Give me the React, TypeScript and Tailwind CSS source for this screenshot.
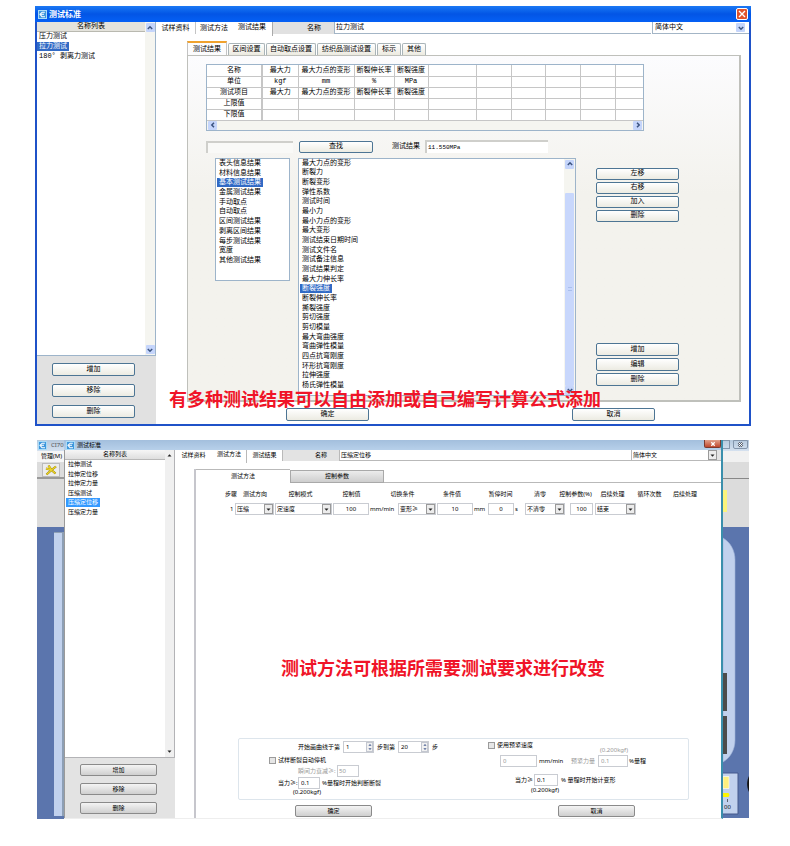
import React from "react";

const XP_TEXT = "font-['Liberation_Mono','Noto_Sans_CJK_SC',monospace] text-[7px] leading-[9px]";
const WIN7_TEXT = "font-['Noto_Sans','Noto_Sans_CJK_SC',sans-serif] text-[6px] leading-[9px]";

const resultCategories = [
  "表头信息结果", "材料信息结果", "基本测试结果", "金属测试结果", "手动取点", "自动取点",
  "区间测试结果", "剥离区间结果", "每步测试结果", "宽度", "其他测试结果",
];

const resultItems = [
  "最大力点的变形", "断裂力", "断裂变形", "弹性系数", "测试时间", "最小力", "最小力点的变形", "最大变形",
  "测试结束日期时间", "测试文件名", "测试备注信息", "测试结果判定", "最大力伸长率", "断裂强度", "断裂伸长率",
  "撕裂强度", "剪切强度", "剪切模量", "最大弯曲强度", "弯曲弹性模量", "四点抗弯刚度", "环形抗弯刚度", "拉伸强度",
  "杨氏弹性模量",
];

const resultTable = [
  ["名称", "最大力", "最大力点的变形", "断裂伸长率", "断裂强度"],
  ["单位", "kgf", "mm", "%", "MPa"],
  ["测试项目", "最大力", "最大力点的变形", "断裂伸长率", "断裂强度"],
  ["上限值"],
  ["下限值"],
];

const tableColumns = [
  "w-[55px]", "w-[36px]", "w-[56px]", "w-[40px]", "w-[34px]", "w-[48px]",
  "w-[35px]", "w-[34px]", "w-[35px]", "w-[35px]", "w-[28px]",
];

const stepHeaders: [string, string][] = [
  ["步骤", "w-[14px]"], ["测试方向", "w-[34px]"], ["控制模式", "w-[57px]"], ["控制值", "w-[45px]"],
  ["切换条件", "w-[57px]"], ["条件值", "w-[42px]"], ["暂停时间", "w-[55px]"], ["清零", "w-[24px]"],
  ["控制参数(%)", "w-[47px]"], ["后续处理", "w-[27px]"], ["循环次数", "w-[47px]"], ["后续处理", "w-[24px]"],
];

function AppIcon() {
  return (
    <svg viewBox="0 0 9 9" className="size-[9px] shrink-0" aria-hidden="true">
      <rect width="9" height="9" fill="#3f97dc" />
      <rect x=".5" y=".5" width="8" height="8" fill="none" stroke="#a9dcf8" />
      <path d="M6.8 2.2H4.2L2 4.2 4 6.8H7M3 4.3h3" fill="none" stroke="#fff" strokeWidth="1.1" />
    </svg>
  );
}

function Chevron({ turn = "" }: { turn?: string }) {
  return (
    <span className="flex size-[9px] shrink-0 items-center justify-center rounded-[1px] bg-[#c5d5fb]">
      <svg viewBox="0 0 6 6" className={`size-[6px] ${turn}`} aria-hidden="true">
        <path d="M.8 2 3 4.2 5.2 2" fill="none" stroke="#3c5480" strokeWidth="1.5" />
      </svg>
    </span>
  );
}

function Triangle({ turn = "" }: { turn?: string }) {
  return (
    <svg viewBox="0 0 6 6" className={`size-[5px] ${turn}`} aria-hidden="true">
      <path d="M.6 1.8h4.8L3 4.6z" fill="#222" />
    </svg>
  );
}

function StepArrow({ turn = "" }: { turn?: string }) {
  return (
    <svg viewBox="0 0 6 6" className={`size-1 ${turn}`} aria-hidden="true">
      <path d="M.6 1.8h4.800L3 4.6z" fill="#4a5f92" />
    </svg>
  );
}

function XpButton({ children, className = "" }: { children: string; className?: string }) {
  return (
    <button
      type="button"
      className={`flex items-center justify-center rounded-[2px] border border-[#4d7594] bg-linear-to-b from-white to-[#ecebe2] ${className}`}
    >
      {children}
    </button>
  );
}

function Win7Button({ children, className = "" }: { children: string; className?: string }) {
  return (
    <button
      type="button"
      className={`flex h-3 w-[77px] items-center justify-center rounded-[2px] border border-[#8a8a8a] bg-linear-to-b from-[#f4f4f4] to-[#cfcfcf] ${className}`}
    >
      {children}
    </button>
  );
}

function List({ items, selected, highlight, label, className }: {
  items: string[]; selected: string; highlight: string; label: string; className: string;
}) {
  return (
    <ul role="listbox" aria-label={label} className={`grid auto-rows-fr ${className}`}>
      {items.map((item) => (
        <li key={item} role="option" aria-selected={item === selected} className="flex items-center">
          <span className={`px-[2px] ${item === selected ? highlight : ""}`}>{item}</span>
        </li>
      ))}
    </ul>
  );
}

function Drop({ value, label, className }: { value: string; label: string; className: string }) {
  return (
    <span className={`relative block shrink-0 border border-[#c9ccd2] bg-white ${className}`}>
      <select aria-label={label} defaultValue={value} className="block h-full w-full appearance-none pl-px leading-[10px] outline-none">
        <option>{value}</option>
      </select>
      <span className="pointer-events-none absolute inset-y-0 right-0 flex w-[9px] items-center justify-center border border-[#9a9a9a] bg-[#ececec]">
        <Triangle />
      </span>
    </span>
  );
}

function Field({ value, label, className, disabled = false }: {
  value: string; label: string; className: string; disabled?: boolean;
}) {
  return (
    <input
      aria-label={label}
      defaultValue={value}
      disabled={disabled}
      className={`block h-3 shrink-0 border border-[#c9ccd2] bg-white outline-none disabled:text-[#999] ${className}`}
    />
  );
}

function Spinner({ value, label }: { value: string; label: string }) {
  return (
    <span className="relative block h-3 w-[31px]">
      <Field value={value} label={label} className="w-full px-[2px]" />
      <span className="pointer-events-none absolute inset-y-px right-px flex w-[7px] flex-col items-center justify-between border border-[#c3c7d0] bg-[#f1f1f1]">
        <StepArrow turn="rotate-180" />
        <StepArrow />
      </span>
    </span>
  );
}

function Tick({ children, className }: { children: string; className: string }) {
  return (
    <label className={`flex items-center gap-[2px] ${className}`}>
      <input type="checkbox" className="size-[7px] appearance-none border border-[#9b9b9b] bg-[#e6e6e6]" />
      {children}
    </label>
  );
}

function ResultsDialog() {
  return (
    <section className={`relative border-x-2 border-b-2 border-[#1f52c8] bg-white ${XP_TEXT}`}>
      <header className="-mx-[2px] flex h-4 items-center gap-[2px] bg-linear-to-b from-[#1c78f4] via-[#0355e5] to-[#0560f5] px-[3px] font-bold text-white">
        <AppIcon />
        <h1 className="flex-1 text-[8px]">测试标准</h1>
        <button type="button" aria-label="关闭" className="flex size-3 items-center justify-center rounded-[2px] border border-white bg-[#e2532b]">
          <svg viewBox="0 0 8 8" className="size-2" aria-hidden="true">
            <path d="m1 1 6 6m0-6L1 7" stroke="#fff" strokeWidth="1.4" />
          </svg>
        </button>
      </header>

      <div className="flex">
        <aside className="flex w-[119px] shrink-0 flex-col bg-[#e1e1e1]">
          <div className="flex h-[334px] border-r border-b border-[#9db4ca] bg-white">
            <div className="flex-1">
              <h2 className="h-[10px] border-b border-[#b9b9b0] bg-[#e4e3dc] text-center">名称列表</h2>
              <List
                items={["压力测试", "拉力测试", "180° 剥离力测试"]}
                selected="拉力测试"
                highlight="bg-[#316ac5] text-white"
                label="名称列表"
                className="h-[29px]"
              />
            </div>
            <div className="flex w-[10px] flex-col items-center justify-between bg-[#f5f5f0] py-px">
              <Chevron turn="rotate-180" />
              <Chevron />
            </div>
          </div>
          <div className="flex flex-col gap-2 pt-[7px] pl-[15px]">
            <XpButton className="h-[13px] w-[83px]">增加</XpButton>
            <XpButton className="h-[13px] w-[83px]">移除</XpButton>
            <XpButton className="h-[13px] w-[83px]">删除</XpButton>
          </div>
        </aside>

        <main className="min-w-0 flex-1">
          <div className="flex h-3">
            <nav className="flex w-[117px] shrink-0">
              <button type="button" className="w-10 border-r border-[#c4c4c4]">试样资料</button>
              <button type="button" className="w-9">测试方法</button>
              <button type="button" className="h-[14px] w-[41px] border-r border-[#aaa] bg-white pb-1">测试结果</button>
            </nav>
            <label htmlFor="xp-name" className="flex w-[61px] shrink-0 items-center justify-end bg-[#e1e1e1] pr-[13px]">名称</label>
            <input id="xp-name" defaultValue="拉力测试" className="min-w-0 flex-1 border-b border-l border-[#a3b5c6] px-px pb-px outline-none" />
            <span className="relative ml-px block w-[97px] border-b border-l border-[#a3b5c6]">
              <select aria-label="语言" defaultValue="简体中文" className="block h-full w-full appearance-none pl-[2px] outline-none">
                <option>简体中文</option>
              </select>
              <span className="pointer-events-none absolute top-px right-1"><Chevron /></span>
            </span>
          </div>

          <div className="mt-2 mr-2 ml-[31px]">
            <nav className="flex h-[13px] items-end gap-px">
              <button type="button" className="h-[14px] w-10 border-x border-t-2 border-x-[#c3c3c3] border-t-[#f0a22e] bg-[#fcfcfd]">测试结果</button>
              {[["区间设置", "w-[37px]"], ["自动取点设置", "w-[50px]"], ["纺织品测试设置", "w-[59px]"], ["标示", "w-6"], ["其他", "w-6"]].map(([name, width]) => (
                <button type="button" key={name} className={`h-3 rounded-t-[2px] border border-b-0 border-[#a9b4b8] bg-linear-to-b from-white to-[#eceae0] ${width}`}>{name}</button>
              ))}
            </nav>

            <div className="h-[347px] border border-r-2 border-b-2 border-[#bfc0bb] bg-linear-to-b from-[#fcfcfe] to-[#f3f2ed] to-40% pt-2 pl-[18px]">
              <div className="w-[438px] border border-[#9db4ca] bg-white">
                <table className="w-full table-fixed border-collapse text-center">
                  <colgroup>
                    {tableColumns.map((width, i) => <col key={i} className={width} />)}
                  </colgroup>
                  <tbody>
                    {resultTable.map((row) => (
                      <tr key={row[0]} className="h-[11px]">
                        {tableColumns.map((_, i) => i === 0 ? (
                          <th key={i} scope="row" className="border-r-2 border-b border-[#c6c6c6] p-0 font-normal">{row[i]}</th>
                        ) : (
                          <td key={i} className="border-r border-b border-[#c6c6c6] p-0 whitespace-nowrap last:border-r-0">{row[i]}</td>
                        ))}
                      </tr>
                    ))}
                  </tbody>
                </table>
                <div className="flex h-[9px] justify-between bg-[#f5f5f0] px-px">
                  <Chevron turn="rotate-90" />
                  <Chevron turn="-rotate-90" />
                </div>
              </div>

              <div className="mt-[10px] flex h-3 items-center">
                <input aria-label="查找内容" className="h-3 w-[87px] border-t-2 border-l-2 border-[#cfcfcb] bg-[#f9f9f7] outline-none" />
                <XpButton className="ml-[6px] h-3 w-[74px]">查找</XpButton>
                <label htmlFor="xp-result" className="ml-[19px] w-[33px]">测试结果</label>
                <input id="xp-result" defaultValue="11.550MPa" className="h-[13px] w-[123px] border-t-2 border-l-2 border-[#cfcfcb] bg-white px-px text-[6px] outline-none" />
              </div>

              <div className="mt-[5px] ml-[9px] flex h-[238px]">
                <div className="h-[123px] w-[75px] border border-[#9db4ca] bg-white">
                  <List items={resultCategories} selected="基本测试结果" highlight="bg-[#316ac5] text-white" label="结果分类" className="h-[107px] px-px" />
                </div>
                <div className="ml-2 flex w-[278px] border border-[#9db4ca] bg-white">
                  <List items={resultItems} selected="断裂强度" highlight="bg-[#316ac5] text-white" label="测试结果项目" className="h-[232px] flex-1 pl-px" />
                  <div className="flex w-[11px] flex-col items-center bg-[#f5f5f0] pt-px">
                    <Chevron turn="rotate-180" />
                    <div className="mt-6 flex w-[9px] flex-1 items-center justify-center rounded-[1px] bg-[#c8d7fc]">
                      <span className="h-1 w-1 border-y border-[#a9bfec]" />
                    </div>
                    <Chevron />
                  </div>
                </div>
                <div className="ml-5 flex flex-col justify-between pt-[10px] pb-[10px]">
                  <div className="flex flex-col gap-[2px]">
                    {["左移", "右移", "加入", "删除"].map((name) => <XpButton key={name} className="h-3 w-[83px]">{name}</XpButton>)}
                  </div>
                  <div className="flex flex-col gap-[2px]">
                    {["增加", "编辑", "删除"].map((name) => <XpButton key={name} className="h-[13px] w-[83px]">{name}</XpButton>)}
                  </div>
                </div>
              </div>
            </div>
          </div>

          <footer className="mt-[6px] mb-[3px] flex gap-[203px] pl-[130px]">
            <XpButton className="h-[13px] w-[83px]">确定</XpButton>
            <XpButton className="h-[13px] w-[83px]">取消</XpButton>
          </footer>
        </main>
      </div>

      <p className="absolute bottom-[17px] left-[132px] font-['Noto_Sans_CJK_SC',sans-serif] text-[18px] leading-[18px] font-bold text-[#f01428]">
        有多种测试结果可以自由添加或自己编写计算公式添加
      </p>
    </section>
  );
}

function BackgroundLeft() {
  return (
    <div className="flex w-[27px] shrink-0 flex-col overflow-hidden whitespace-nowrap">
      <div className="flex h-[11px] items-center gap-1 bg-linear-to-b from-[#b5c9de] to-[#d5e1ef] pl-px text-[#555]">
        <AppIcon />CI70
      </div>
      <div className="flex h-[11px] items-center bg-[#f6f6f6] pl-1">管理(M)</div>
      <div className="flex h-[17px] items-center border-b-2 border-[#999] bg-[#dcdcdc] pl-[5px]">
        <button type="button" aria-label="工具" className="flex h-[14px] w-[18px] items-center justify-center border border-[#bbb] bg-[#ececec]">
          <svg viewBox="0 0 12 12" className="size-3" aria-hidden="true">
            <path d="M3.500 1.500 6.500 6l4 3.500M11 2.500 6.500 6l-5 4.500M1 4.500 6.500 6" fill="none" stroke="#8c7a10" strokeWidth="2.2" />
            <path d="M3.500 1.500 6.500 6l4 3.500M11 2.500 6.500 6l-5 4.500M1 4.500 6.500 6" fill="none" stroke="#ecd325" strokeWidth="1.400" />
          </svg>
        </button>
      </div>
      <div className="h-12 bg-[#dcdcdc]" />
      <div className="flex-1 bg-[#5b75ad] pt-[5px] pb-[3px] pl-[17px]">
        <div className="h-full border-t border-r-2 border-[#8d9fb5] bg-[#c1d1ed]" />
      </div>
    </div>
  );
}

function BackgroundRight() {
  return (
    <div className="flex w-[26px] shrink-0 flex-col overflow-hidden">
      <div className="flex h-[11px] justify-between bg-linear-to-b from-[#b5c9de] to-[#d5e1ef] pr-px">
        <span className="h-[9px] w-[7px] border border-l-0 border-[#8395ab]" />
        <button type="button" aria-label="关闭主窗口" className="flex h-[9px] w-[15px] items-center justify-center rounded-b-[2px] border border-[#8395ab]">
          <svg viewBox="0 0 7 7" className="size-[7px]" aria-hidden="true">
            <path d="m1.5 1.5 4 4m0-4-4 4" stroke="#555f6e" strokeWidth="2.2" />
            <path d="m1.5 1.5 4 4m0-4-4 4" stroke="#fff" strokeWidth="1" />
          </svg>
        </button>
      </div>
      <div className="h-[11px] bg-[#f1f1f1]" />
      <div className="h-[17px] border-b border-[#888] bg-[#dcdcdc]" />
      <div className="h-12 bg-[#dcdcdc] pt-[11px]">
        <div className="h-[22px] w-1 bg-[#fbf47c]" />
      </div>
      <svg viewBox="0 0 26 291" className="block h-[291px] w-[26px] bg-[#5b75ad]" aria-hidden="true">
        <path d="M0 11c7 4 12 12 12 22v180c0 10-5 18-12 22z" fill="#c1d1ed" stroke="#9fb3d8" strokeWidth=".6" />
        <path d="M0 146h4v38H0zM0 189h4v38H0z" fill="#4c4c4c" />
        <path d="M0 246h15v41H0z" fill="#c1d1ed" />
        <path d="M0 246h15v41H0" fill="none" stroke="#44598c" />
        <path d="M0 249.5h6v12H0z" fill="#fdf07f" stroke="#fff" strokeWidth=".6" />
        <path d="M0 266h5.500l1 2-1 2H0z" fill="#fbf500" />
        <path d="M4.500 272v3" stroke="#333" strokeWidth=".7" />
        <text x="1" y="282" fontSize="6" fill="#111">00</text>
        <path d="M26 249c-2.500 5-2.500 11 0 16z" fill="#111" />
      </svg>
    </div>
  );
}

function MethodDialog() {
  return (
    <section className={`flex h-[379px] ${WIN7_TEXT}`}>
      <BackgroundLeft />
      <div className="flex min-w-0 flex-1 flex-col border-r-2 border-b border-r-[#3a8fac] border-b-[#eee] bg-white">
        <header className="flex h-[10px] shrink-0 items-center gap-[2px] bg-linear-to-b from-[#a3bfdd] to-[#b7d0ea] pl-[2px]">
          <AppIcon />
          <h1 className="flex-1">测试标准</h1>
          <button type="button" aria-label="关闭" className="flex h-2 w-[17px] items-center justify-center self-start rounded-b-[2px] border border-t-0 border-[#7b3a30] bg-linear-to-b from-[#e0a08c] to-[#c0462c]">
            <svg viewBox="0 0 7 7" className="size-[6px]" aria-hidden="true">
              <path d="m1.5 1.5 4 4m0-4-4 4" stroke="#fff" strokeWidth="1.5" />
            </svg>
          </button>
        </header>

        <div className="flex min-h-0 flex-1">
          <aside className="flex w-[111px] shrink-0 flex-col border-l border-[#9a9a9a] bg-[#e3e3e3]">
            <div className="flex h-[308px] border-r border-b border-[#b3b3b6] bg-white">
              <div className="flex-1">
                <h2 className="h-[10px] border-b border-[#b8b8b8] bg-linear-to-b from-[#f6f6f6] to-[#dedede] text-center">名称列表</h2>
                <List
                  items={["拉伸测试", "拉伸定位移", "拉伸定力量", "压缩测试", "压缩定位移", "压缩定力量"]}
                  selected="压缩定位移"
                  highlight="bg-[#3399ff] text-white"
                  label="名称列表"
                  className="h-[57px] px-px"
                />
              </div>
              <div className="flex w-[9px] flex-col items-center justify-between bg-[#f0f0f0] py-[3px]">
                <Triangle turn="rotate-180" />
                <Triangle />
              </div>
            </div>
            <div className="flex flex-col gap-[7px] pt-[6px] pl-[15px]">
              <Win7Button>增加</Win7Button>
              <Win7Button>移除</Win7Button>
              <Win7Button>删除</Win7Button>
            </div>
          </aside>

          <main className="flex min-w-0 flex-1 flex-col">
            <div className="flex h-[11px] shrink-0">
              <nav className="flex w-[108px] shrink-0">
                <button type="button" className="w-[37px]">试样资料</button>
                <button type="button" className="h-[13px] w-[35px] border-r border-[#b9b9b9] bg-white pb-1">测试方法</button>
                <button type="button" className="w-9 border-r border-[#b9b9b9]">测试结果</button>
              </nav>
              <label htmlFor="w7-name" className="flex w-14 shrink-0 items-center justify-end bg-[#e3e3e3] pr-3">名称</label>
              <input id="w7-name" defaultValue="压缩定位移" className="min-w-0 flex-1 border-b border-l border-[#b9b9b9] px-px outline-none" />
              <span className="flex w-[90px] shrink-0 border-b border-l border-[#b9b9b9] bg-[#e3e3e3] pr-1">
                <Drop value="简体中文" label="语言" className="h-[10px] w-full border-none" />
              </span>
            </div>

            <div className="mt-2 ml-[19px] flex flex-1 flex-col border-l-2 border-[#c6c6cc]">
              <nav className="flex h-[14px] shrink-0">
                <button type="button" className="w-[94px] border-t border-[#b9b9b9]">测试方法</button>
                <button type="button" className="mt-px w-[94px] border border-[#a9a9a9] bg-linear-to-b from-[#ececec] to-[#cecece]">控制参数</button>
                <span className="flex-1 border-b border-[#b9b9b9]" />
              </nav>

              <div className="mt-[7px] flex pl-7 text-center whitespace-nowrap">
                {stepHeaders.map(([name, width], i) => (
                  <span key={i} className={`flex shrink-0 justify-center ${width}`}>{name}</span>
                ))}
              </div>
              <div className="mt-1 flex items-center pl-[34px]">
                <span className="w-[5px]">1</span>
                <Drop value="压缩" label="测试方向" className="h-3 w-[39px]" />
                <Drop value="定速度" label="控制模式" className="ml-px h-3 w-[57px]" />
                <Field value="100" label="控制值" className="ml-px w-9 text-center" />
                <span className="w-[29px] pl-px">mm/min</span>
                <Drop value="变形≥" label="切换条件" className="h-3 w-[38px]" />
                <Field value="10" label="条件值" className="ml-px w-9 text-center" />
                <span className="w-[15px] pl-px">mm</span>
                <Field value="0" label="暂停时间" className="w-[26px] text-center" />
                <span className="w-[11px] pl-px">s</span>
                <Drop value="不清零" label="清零" className="h-3 w-10" />
                <Field value="100" label="控制参数(%)" className="ml-[5px] w-[23px] text-center" />
                <Drop value="结束" label="后续处理" className="ml-[2px] h-3 w-[41px]" />
              </div>

              <p className="flex-1 pt-[143px] pr-[31px] text-center font-['Noto_Sans_CJK_SC',sans-serif] text-[18px] leading-[18px] font-bold text-[#f01428]">
                测试方法可根据所需要测试要求进行改变
              </p>

              <div className="mr-8 ml-[42px] flex h-[62px] shrink-0 rounded-[2px] border border-[#dde5ec] whitespace-nowrap">
                <div className="w-[249px] pt-[2px]">
                  <div className="flex h-3 items-center gap-[3px] pl-[59px]">
                    开始画曲线于第
                    <Spinner value="1" label="开始步" />
                    步到第
                    <Spinner value="20" label="结束步" />
                    步
                  </div>
                  <Tick className="mt-[3px] h-[9px] pl-[30px]">试样断裂自动停机</Tick>
                  <div className="flex h-3 items-center pl-[59px] text-[#999]">
                    <span className="w-[39px]">瞬间力衰减≥:</span>
                    <Field disabled value="50" label="瞬间力衰减" className="w-[22px] px-px" />
                  </div>
                  <div className="flex h-3 items-center pl-[39px]">
                    <span className="w-5">当力≥:</span>
                    <Field value="0.1" label="判断断裂力" className="w-[22px] px-[2px]" />
                    <span className="pl-[2px]">%量程时开始判断断裂</span>
                  </div>
                  <div className="-mt-px pl-[54px]">(0.200kgf)</div>
                </div>
                <div className="flex-1 pt-[2px]">
                  <Tick className="h-[9px]">使用预紧速度</Tick>
                  <div className="-mt-[4px] pl-[112px] text-[#999]">(0.200kgf)</div>
                  <div className="flex h-3 items-center pl-3">
                    <Field disabled value="0" label="预紧速度" className="w-[37px] px-[2px]" />
                    <span className="w-[34px] pl-[2px]">mm/min</span>
                    <span className="w-[27px] text-[#999]">预紧力量</span>
                    <Field disabled value="0.1" label="预紧力量" className="w-[30px] px-[2px]" />
                    <span className="pl-px">%量程</span>
                  </div>
                  <div className="mt-[7px] flex h-3 items-center pl-[27px]">
                    <span className="w-[19px]">当力≥</span>
                    <Field value="0.1" label="计变形力" className="w-6 px-[2px]" />
                    <span className="pl-[3px]">% 量程时开始计变形</span>
                  </div>
                  <div className="pl-[43px]">(0.200kgf)</div>
                </div>
              </div>

              <footer className="mt-1 mb-px flex shrink-0 gap-[186px] pt-px pl-[99px]">
                <Win7Button>确定</Win7Button>
                <Win7Button>取消</Win7Button>
              </footer>
            </div>
          </main>
        </div>
      </div>
      <BackgroundRight />
    </section>
  );
}

export default function App() {
  return (
    <div className="min-h-screen bg-white pt-[6px] pb-6 text-black">
      <div className="mr-[39px] ml-[35px]">
        <ResultsDialog />
      </div>
      <div className="mt-[14px] mr-[41px] ml-[37px]">
        <MethodDialog />
      </div>
    </div>
  );
}
